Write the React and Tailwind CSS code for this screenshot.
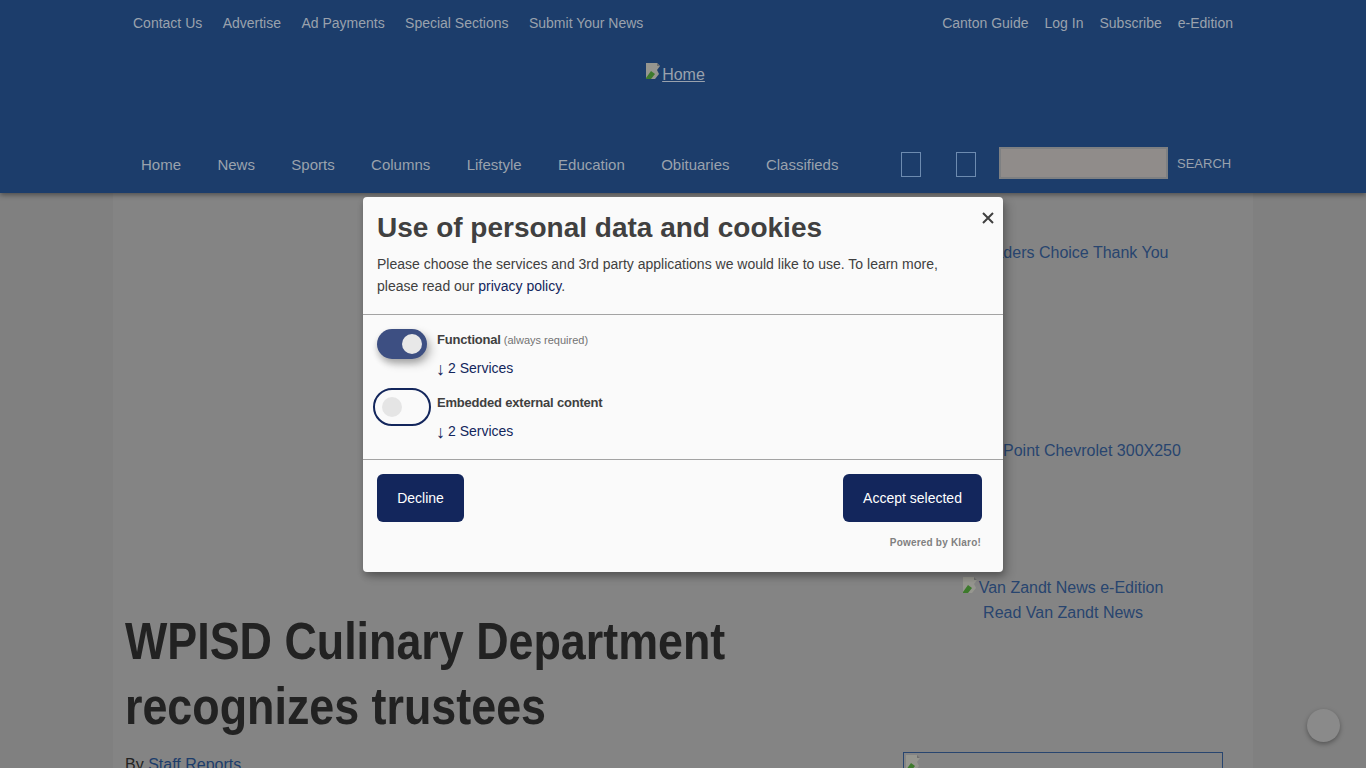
import { useState } from "react";

const topLeft = ["Contact Us", "Advertise", "Ad Payments", "Special Sections", "Submit Your News"];
const topRight = ["Canton Guide", "Log In", "Subscribe", "e-Edition"];
const mainNav = ["Home", "News", "Sports", "Columns", "Lifestyle", "Education", "Obituaries", "Classifieds"];

function BrokenImage({ className = "" }) {
  return (
    <svg viewBox="0 0 16 16" width="16" height="16" className={`shrink-0 ${className}`}>
      <path d="M0 0h11l3 3-3 4 2 4-4 5H0z" fill="#96968f" />
      <path d="M11 0l3 3h-3z" fill="#6f6f6f" />
      <path d="M0 15l5-7 4 3-4 5H0z" fill="#3d7a2c" />
    </svg>
  );
}

function Toggle({ on }) {
  if (on) {
    return (
      <div className="w-[50px] h-[30px] rounded-full bg-[#3d4f82] flex items-center justify-end pr-[5px] shadow-[0_4px_6px_0_rgba(0,0,0,0.2),5px_5px_10px_0_rgba(0,0,0,0.19)]">
        <div className="w-5 h-5 rounded-full bg-[#e8e8e8]" />
      </div>
    );
  }
  return (
    <div className="w-[50px] h-[30px] rounded-full bg-[#fafafa] flex items-center pl-[5px] outline-2 outline-offset-2 outline-[#13265c]">
      <div className="w-5 h-5 rounded-full bg-[#e5e5e5]" />
    </div>
  );
}

function Service({ on, title, note }) {
  return (
    <div className="flex gap-[10px] h-[63px]">
      <Toggle on={on} />
      <div>
        <div className="h-[22px] flex items-center text-[13px] text-[#404040]">
          <span className="font-bold tracking-[-0.2px]">{title}</span>
          {note && <span className="text-[11px] text-[#737373] ml-[3px]">{note}</span>}
        </div>
        <div className="flex mt-[6px] text-sm leading-[22px] text-[#13265c]">
          <span className="w-[11px] text-lg leading-[24px] -ml-[1px] mr-[1px]">↓</span>
          <span>2 Services</span>
        </div>
      </div>
    </div>
  );
}

export default function App() {
  const [open] = useState(true);

  return (
    <div className="relative h-screen overflow-hidden bg-[#808080] font-['Liberation_Sans',Arial,sans-serif]">
      <header className="relative z-10 h-[193px] bg-[#1c3d6b] shadow-[0_2px_5px_rgba(0,0,0,0.4)] text-[#9aa2ad]">
        <div className="w-[1140px] mx-auto px-5 pt-[15px] flex justify-between text-sm leading-4">
          <div className="flex gap-[20.4px]">
            {topLeft.map((t) => (
              <a key={t}>{t}</a>
            ))}
          </div>
          <div className="flex gap-4">
            {topRight.map((t) => (
              <a key={t}>{t}</a>
            ))}
          </div>
        </div>

        <div className="flex justify-center mt-[31px] h-6">
          <a className="flex text-base leading-[26px] underline ml-[-15px]">
            <BrokenImage className="mt-[1px]" />
            Home
          </a>
        </div>

        <div className="w-[1140px] mx-auto flex items-center mt-[63px] pl-7 text-[15px]">
          <nav className="flex gap-[36.4px] w-[760px] pt-[2px]">
            {mainNav.map((t) => (
              <a key={t}>{t}</a>
            ))}
          </nav>
          <div className="w-5 h-[25px] border border-[#6d8bb0]" />
          <div className="w-5 h-[25px] border border-[#6d8bb0] ml-[35px]" />
          <div className="w-[169px] h-8 bg-[#908c8a] border-2 border-[#7e8082] ml-[23px] -mt-[2px]" />
          <span className="ml-[9px] text-[13px]">SEARCH</span>
        </div>
      </header>

      <main className="w-[1140px] h-[575px] mx-auto bg-[#848484] flex">
        <div className="w-[790px] pl-3 pt-[416px] text-[#222222]">
          <h1 className="text-[52px] leading-[65px] font-bold scale-x-[0.862] origin-left w-[800px]">
            WPISD Culinary Department recognizes trustees
          </h1>
          <p className="mt-[14px] text-[#222] text-base">
            By <a className="text-[#1c3d6b]">Staff Reports</a>
          </p>
        </div>
        <aside className="flex-1 text-[#28456f] text-base text-center">
          <div className="pl-[71px] pt-[48px] h-[247px] text-left">Readers Choice Thank You</div>
          <div className="-mt-[1px] h-[136px] pl-[100px] text-left">Point Chevrolet 300X250</div>
          <div className="ml-[60px] w-[200px] mt-[1px]">
            <a className="flex justify-center whitespace-nowrap">
              <BrokenImage className="mt-[1px]" />
              Van Zandt News e-Edition
            </a>
            <a className="block mt-[1px]">Read Van Zandt News</a>
          </div>
          <div className="mt-[127px] w-[320px] h-[200px] border border-[#28456f] p-[2px]">
            <BrokenImage />
          </div>
        </aside>
      </main>

      {open && (
        <div className="absolute z-20 left-[363px] top-[197px] w-[640px] h-[375px] bg-[#fafafa] rounded shadow-[0_4px_6px_rgba(0,0,0,0.2),5px_5px_10px_rgba(0,0,0,0.19)] text-[#404040]">
          <div className="relative h-[118px] px-[14px] pt-[14px] border-b border-[#a3a3a3]">
            <h2 className="text-[28px] leading-[33px] font-bold">Use of personal data and cookies</h2>
            <p className="mt-[9px] w-[570px] text-sm leading-[22px]">
              Please choose the services and 3rd party applications we would like to use. To learn more, please read our{" "}
              <a className="text-[#13265c]">privacy policy</a>.
            </p>
            <svg viewBox="0 0 12 12" width="12" height="12" className="absolute top-[15px] right-[9px]">
              <path d="M1 1l10 10M11 1L1 11" stroke="#404040" strokeWidth="2" />
            </svg>
          </div>
          <div className="h-[145px] px-[14px] pt-[14px] border-b border-[#a3a3a3]">
            <Service on title="Functional" note="(always required)" />
            <Service title="Embedded external content" />
          </div>
          <div className="px-[14px] pt-[14px]">
            <div className="flex justify-between pr-[7px]">
              <button className="w-[87px] h-12 rounded-md bg-[#13265c] text-white text-sm">Decline</button>
              <button className="w-[139px] h-12 rounded-md bg-[#13265c] text-white text-sm">Accept selected</button>
            </div>
            <p className="mt-[15px] pr-2 text-right text-[10px] font-bold leading-3 tracking-[0.2px] text-[#808080]">Powered by Klaro!</p>
          </div>
        </div>
      )}

      <div className="absolute z-20 left-[1307px] top-[709px] w-[33px] h-[33px] rounded-full bg-[#8a8a8a] shadow-[0_2px_5px_rgba(0,0,0,0.35)]" />
    </div>
  );
}
